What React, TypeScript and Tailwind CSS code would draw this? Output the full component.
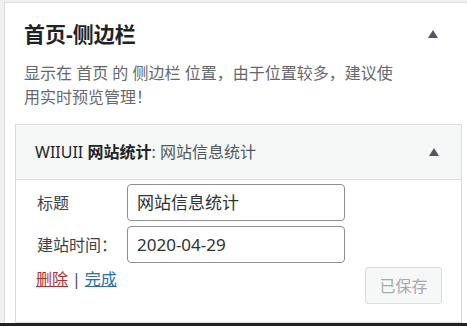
import React from "react";

const Arrow = () => (
  <svg width="10" height="8" viewBox="0 0 10 8" className="block">
    <path d="M5 0 L10 8 L0 8 Z" fill="#50575e" />
  </svg>
);

export default function App() {
  return (
    <div className="w-[467px] h-[326px] overflow-hidden bg-[#f0f0f1] flex flex-col font-['Noto_Sans','Noto_Sans_CJK_SC',sans-serif]">
      <div className="mt-[2px] ml-[4px] w-[470px] h-[321px] shrink-0 bg-white border-t border-l border-[#dcdcde] flex flex-col">
        <div className="flex items-center pt-[17px] pl-[19px] pr-[36px]">
          <h2 className="flex-1 text-[21px] leading-[28px] font-bold text-[#1d2327]">首页-侧边栏</h2>
          <Arrow />
        </div>
        <p className="mt-[13px] pl-[19px] w-[394px] text-[16px] leading-[24px] text-[#646970]">
          显示在 首页 的 侧边栏 位置，由于位置较多，建议使用实时预览管理！
        </p>
        <div className="mt-[15px] ml-[10px] w-[447px] h-[199px] border border-[#dcdcde] flex flex-col">
          <div className="h-[54px] bg-[#f6f7f7] flex items-center pl-[19px] pr-[22px] border-b border-[#dcdcde] box-content">
            <div className="flex-1 text-[16px] leading-[24px] text-[#1d2327]">
              WIIUII <strong className="font-bold">网站统计</strong>
              <span className="text-[#50575e]">: 网站信息统计</span>
            </div>
            <Arrow />
          </div>
          <div className="flex-1 bg-white pt-[4px] pl-[20px] pr-[19px] flex flex-col">
            <div className="flex flex-col gap-[5px]">
              <div className="flex items-center">
                <label className="w-[91px] pl-[1px] text-[16px] text-[#3c434a]">标题</label>
                <div className="w-[218px] h-[37px] border border-[#8c8f94] rounded-[4px] flex items-center pl-[9px] text-[17px] text-[#2c3338]">
                  网站信息统计
                </div>
              </div>
              <div className="flex items-center">
                <label className="w-[91px] pl-[1px] text-[16px] text-[#3c434a]">建站时间：</label>
                <div className="w-[218px] h-[37px] border border-[#8c8f94] rounded-[4px] flex items-center pl-[9px] text-[17px] text-[#2c3338]">
                  2020-04-29
                </div>
              </div>
            </div>
            <div className="mt-[4px] flex items-start justify-between">
              <div className="flex text-[16px] leading-[24px] text-[#3c434a]">
                <span className="text-[#b32d2e] underline">删除</span>
                <span className="mx-[4px]">|</span>
                <span className="text-[#2271b1] underline">完成</span>
              </div>
              <div className="w-[77px] h-[37px] border border-[#dcdcde] bg-[#f6f7f7] rounded-[3px] flex items-center justify-center text-[16px] text-[#a7aaad]">
                已保存
              </div>
            </div>
          </div>
        </div>
      </div>
      <div className="h-[3px] shrink-0 bg-[#1d2327]" />
    </div>
  );
}
